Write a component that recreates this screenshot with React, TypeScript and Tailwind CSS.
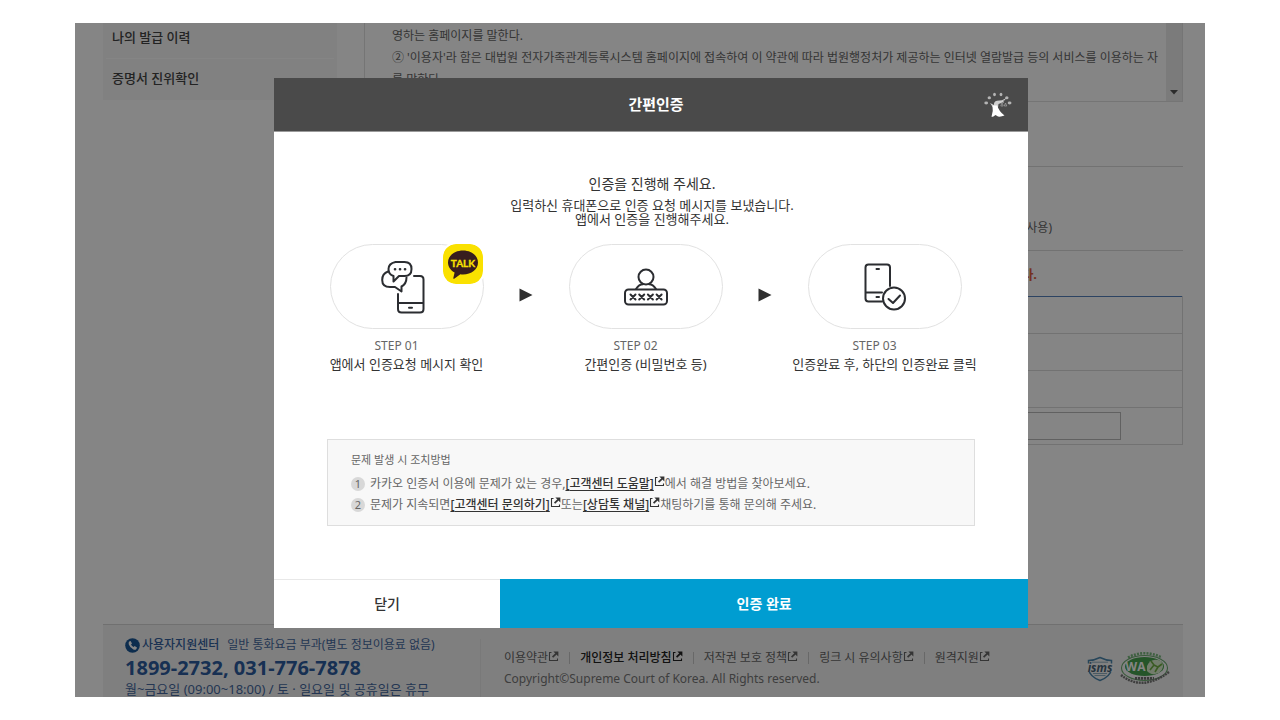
import React from "react";

function ExternalIcon() {
  return (
    <svg viewBox="0 0 11 11" className="mb-1 inline-block h-[11px] w-[11px] shrink-0" fill="none" stroke="currentColor" aria-hidden="true">
      <path d="M3.5 1.5H1.5V9.5H9.5V7.5" strokeWidth="1.1" />
      <path d="M4.6 6.2L8.2 2.6" strokeWidth="1.8" />
      <path d="M5.4 0.5H10.400V5.500Z" fill="currentColor" stroke="none" />
    </svg>
  );
}

function TalkBadge() {
  return (
    <svg viewBox="0 0 40 40" className="absolute -top-px right-0 h-10 w-10 rounded-[13px] ring-2 ring-white" role="img" aria-label="TALK">
      <rect width="40" height="40" rx="13" fill="#fae100" />
      <path d="M20 6.500c-8.500 0-15 5.300-15 12 0 4.300 2.700 7.900 6.600 10l-1.300 5.600c-.1.600.4.900.9.600l6.200-4.400c.8.100 1.700.2 2.600.2 8.500 0 15-5.300 15-12s-6.500-12-15-12z" fill="#371d1e" />
      <text x="20" y="22.500" textAnchor="middle" fontSize="10" fontWeight="bold" fontFamily="Lato, sans-serif" fill="#fae100" stroke="#fae100" strokeWidth=".3">TALK</text>
    </svg>
  );
}

function ChatPhoneIcon() {
  return (
    <svg viewBox="0 0 44 54" className="mr-2 h-[54px] w-11" fill="none" stroke="#2b2d31" strokeWidth="2" strokeLinecap="round" strokeLinejoin="round" aria-hidden="true">
      <path d="M33 16H39Q42.500 16 42.500 19.500V49Q42.500 52.500 39 52.500H20.500Q17 52.500 17 49V34M17 43H42.500M28 47.800H31" />
      <path d="M14.500 2H23.500Q30.500 2 30.500 9T23.500 16H18L12.500 21.500V16Q7.500 14.500 7.500 9T14.500 2Z" />
      <path d="M7 11.500Q1.200 13.500 1.200 20Q1.200 27 9 27H14L20.500 31.500V26.500Q25.500 24 25.500 17.500" />
      <path d="M14 9.200H14.100M19 9.200H19.100M24 9.200H24.100" strokeWidth="2.600" />
    </svg>
  );
}

function PasswordIcon() {
  return (
    <svg viewBox="0 0 44 38" className="h-[38px] w-11" fill="none" stroke="#2b2d31" strokeWidth="2" strokeLinecap="round" strokeLinejoin="round" aria-hidden="true">
      <circle cx="22" cy="9" r="7.500" />
      <path d="M12 21Q15 16.300 19 16.300M32 21Q29 16.300 25 16.300" />
      <rect x="1" y="21.500" width="42" height="15" rx="3.500" />
      <path d="M6.500 26.500l5 5m0-5l-5 5M15.200 26.500l5 5m0-5l-5 5M23.900 26.500l5 5m0-5l-5 5M32.600 26.500l5 5m0-5l-5 5" />
    </svg>
  );
}

function PhoneCheckIcon() {
  return (
    <svg viewBox="0 0 42 48" className="h-12 w-[42px]" fill="none" stroke="#2b2d31" strokeWidth="2" strokeLinecap="round" strokeLinejoin="round" aria-hidden="true">
      <path d="M18 38.500H4.500Q1.500 38.500 1.500 35.500V4.500Q1.500 1.500 4.500 1.500H23Q26 1.500 26 4.500V23M1.500 29.500H18M12.500 6H15M12.500 34H15" />
      <circle cx="30" cy="35.500" r="11" />
      <path d="M24.500 36L29 40L36 32.500" />
    </svg>
  );
}

function HeaderEmblem() {
  return (
    <svg viewBox="0 0 28 26" className="h-[26px] w-7" aria-hidden="true">
      <g fill="#b4b4b4">
        <ellipse cx="2.200" cy="11" rx="1.900" ry="1.400" />
        <ellipse cx="5.300" cy="5.800" rx="1.700" ry="1.500" />
        <ellipse cx="10.500" cy="2.500" rx="1.400" ry="1.700" />
        <ellipse cx="17" cy="2.500" rx="1.400" ry="1.700" />
        <ellipse cx="22.800" cy="5.800" rx="1.700" ry="1.500" />
        <ellipse cx="25.600" cy="11" rx="1.900" ry="1.400" />
      </g>
      <path d="M6 11L10 13Q9.500 9.500 13 8.800L18 8.300L22.500 6L18.500 10.500L14.500 12L14 15.500L9 15.500Z" fill="#cfcfcf" />
      <path d="M8.500 13.500H13.200Q15 19.500 20.500 23.500Q17 25 14 24.500L11.500 23L9 24.800H7.500Q9.500 19 8.500 13.500Z" fill="#fff" />
      <path d="M19.500 8V11M16.800 14L18 10.500L19.200 14ZM20.300 14L21.500 11L22.700 14Z" fill="none" stroke="#9c9c9c" strokeWidth=".8" />
    </svg>
  );
}

function IsmsMark() {
  return (
    <svg viewBox="0 0 28 26" className="h-[26px] w-7" role="img" aria-label="ISMS">
      <path d="M14 1.500Q8 4.500 2.500 4.500V13Q3.500 20.500 14 24.500Q24.500 20.500 25.500 13V4.500Q20 4.500 14 1.500Z" fill="none" stroke="#4b86ad" strokeWidth="1.500" />
      <path d="M6 6.200H22M7 17.500H21M8.500 19.500H19.500" stroke="#8faec0" strokeWidth="1" />
      <rect y="7.500" width="28" height="8.500" fill="#f7f7f7" />
      <text x="14" y="15.500" textAnchor="middle" fontSize="11.500" fontWeight="bold" fontStyle="italic" fontFamily="Open Sans, sans-serif" fill="#4a6478">isms</text>
    </svg>
  );
}

function WaMark() {
  return (
    <svg viewBox="0 0 50 36" className="h-9 w-[50px]" role="img" aria-label="WA">
      <path d="M8 6.500Q24-2 42 6.500" fill="none" stroke="#79b97e" strokeWidth="2.600" strokeDasharray="2 1.200" />
      <ellipse cx="24.500" cy="17" rx="23" ry="12.500" fill="#f9f9f9" stroke="#6cab70" strokeWidth="1.100" />
      <ellipse cx="24.500" cy="15.500" rx="19.500" ry="9.500" fill="#48a34f" />
      <path d="M27 15Q31 6 41 10Q46 16 39 22Q31 25 27 20Z" fill="#dcefcf" />
      <path d="M30 19L34 14L31 10M34 14L38 16L35 21M38 16L42 13" fill="none" stroke="#71ae43" strokeWidth="1.600" />
      <text x="15.500" y="20" textAnchor="middle" fontSize="12" fontWeight="bold" fontFamily="Open Sans, sans-serif" fill="#fff">WA</text>
      <path d="M15 27.300H34" stroke="#707070" strokeWidth="2.800" strokeDasharray="2.200 .8" />
      <path d="M1 24Q22 41 49 21" fill="none" stroke="#777" strokeWidth="2.400" strokeDasharray="2 .8" />
    </svg>
  );
}

function Arrow() {
  return (
    <svg viewBox="0 0 14 14" className="mt-11 h-3.5 w-3.5" aria-hidden="true">
      <path d="M0.500 0.500L13.500 7L0.500 13.500Z" fill="#2f2f2f" />
    </svg>
  );
}

function Step({ no, text, icon, badge }: { no: string; text: string; icon: React.ReactNode; badge?: React.ReactNode }) {
  return (
    <li className="flex flex-1 flex-col items-center whitespace-nowrap">
      <div className="relative flex h-[85px] w-[154px] items-center justify-center rounded-full border border-[#e2e2e2]">
        {icon}
        {badge}
      </div>
      <span className="mt-2 pr-5 text-xs leading-[18px] text-[#666]">{no}</span>
      <span className="text-[13px] leading-[18px] text-[#333]">{text}</span>
    </li>
  );
}

function HelpLink({ children }: { children: React.ReactNode }) {
  return (
    <a href="#help" className="inline-flex items-center text-[#333]">
      <span className="font-medium underline underline-offset-2">[{children}]</span>
      <ExternalIcon />
    </a>
  );
}

function HelpItem({ no, children }: { no: number; children: React.ReactNode }) {
  return (
    <li className="flex items-center">
      <span className="mr-[5px] flex h-3.5 w-3.5 items-center justify-center rounded-full bg-[#d8d8d8] text-[11px]">{no}</span>
      <span>{children}</span>
    </li>
  );
}

function Modal() {
  return (
    <section role="dialog" aria-modal="true" aria-labelledby="modal-title" className="w-full max-w-[754px] self-start bg-white">
      <header className="flex h-[54px] items-center border-b border-[#9a9a9a] bg-[#4a4a4a] pr-4 pl-[54px]">
        <h1 id="modal-title" className="flex-1 text-center text-[15px] font-bold text-white">간편인증</h1>
        <HeaderEmblem />
      </header>
      <div className="px-[53px] pt-[42px] pb-[53px]">
        <p className="pl-0.5 text-center text-sm leading-5 text-[#333]">인증을 진행해 주세요.</p>
        <p className="mt-1 pl-0.5 text-center text-[13px] leading-[14px] text-[#333]">
          입력하신 휴대폰으로 인증 요청 메시지를 보냈습니다.
          <br />
          앱에서 인증을 진행해주세요.
        </p>
        <ol className="-mr-[22px] -ml-[33px] mt-[18px] flex">
          <Step no="STEP 01" text="앱에서 인증요청 메시지 확인" icon={<ChatPhoneIcon />} badge={<TalkBadge />} />
          <li aria-hidden="true"><Arrow /></li>
          <Step no="STEP 02" text="간편인증 (비밀번호 등)" icon={<PasswordIcon />} />
          <li aria-hidden="true"><Arrow /></li>
          <Step no="STEP 03" text="인증완료 후, 하단의 인증완료 클릭" icon={<PhoneCheckIcon />} />
        </ol>
        <div className="mt-[66px] border border-[#dedede] bg-[#f8f8f8] px-[23px] pt-[10px] pb-[10px] text-xs text-[#666]">
          <h2 className="text-[11px] leading-5">문제 발생 시 조치방법</h2>
          <ol className="mt-[3px] leading-[21px]">
            <HelpItem no={1}>
              카카오 인증서 이용에 문제가 있는 경우,<HelpLink>고객센터 도움말</HelpLink>에서 해결 방법을 찾아보세요.
            </HelpItem>
            <HelpItem no={2}>
              문제가 지속되면<HelpLink>고객센터 문의하기</HelpLink>또는<HelpLink>상담톡 채널</HelpLink>채팅하기를 통해 문의해 주세요.
            </HelpItem>
          </ol>
        </div>
      </div>
      <div className="flex h-[49px] text-sm">
        <button type="button" className="w-[30%] border-t border-[#e8e8e8] font-medium text-[#333]">닫기</button>
        <button type="button" className="flex-1 bg-[#009dd1] font-bold text-white">인증 완료</button>
      </div>
    </section>
  );
}

const footerLinks = [
  { text: "이용약관", style: "text-[#666]" },
  { text: "개인정보 처리방침", style: "font-medium text-[#222]" },
  { text: "저작권 보호 정책", style: "text-[#666]" },
  { text: "링크 시 유의사항", style: "text-[#666]" },
  { text: "원격지원", style: "text-[#666]" },
];

function Footer() {
  return (
    <footer className="mr-[22px] ml-7 flex h-[73px] shrink-0 overflow-hidden border-t border-[#d6d6d6] bg-[#f4f4f4]">
      <div className="w-[377px] shrink-0 pt-[10px] pl-[22px] whitespace-nowrap text-[#45699f]">
        <p className="flex items-center text-xs leading-5">
          <svg viewBox="0 0 15 15" className="mr-0.5 h-[15px] w-[15px]" aria-hidden="true">
            <circle cx="7.500" cy="7.500" r="7.300" fill="#1a5796" />
            <path d="M4.200 3.500L5.600 2.900L7 5.400L6 6.400Q6.800 8.200 8.600 9L9.600 8L12 9.500L11.400 10.900Q10.300 12.300 8.400 11.500Q5 10 3.800 6.600Q3.300 4.500 4.200 3.500Z" fill="#fff" />
          </svg>
          <strong className="mr-2 font-medium text-[#33609e]">사용자지원센터</strong>
          일반 통화요금 부과(별도 정보이용료 없음)
        </p>
        <p className="text-xl leading-[26px] font-bold text-[#2d5c9f]">1899-2732, 031-776-7878</p>
        <p className="text-[13px] leading-4">월~금요일 (09:00~18:00) / 토 · 일요일 및 공휴일은 휴무</p>
      </div>
      <div className="mt-[14px] flex-1 border-l border-[#e8e8e8] pl-[23px] whitespace-nowrap">
        <nav className="mt-[9px] flex items-center text-xs leading-5">
          {footerLinks.map((link, i) => (
            <span key={link.text} className="flex items-center">
              {i > 0 && <span className="mx-[10px] h-3 w-px bg-[#c8c8c8]" />}
              <a href="#footer" className={"flex items-center " + link.style}>
                {link.text}
                <ExternalIcon />
              </a>
            </span>
          ))}
        </nav>
        <p className="text-xs leading-[22px] text-[#777]">Copyright©Supreme Court of Korea. All Rights reserved.</p>
      </div>
      <div className="flex items-center gap-1.5 pt-4 pr-[13px]">
        <IsmsMark />
        <WaMark />
      </div>
    </footer>
  );
}

export default function App() {
  return (
    <div className="bg-white px-[75px] py-[23px] font-['Noto_Sans','Noto_Sans_CJK_KR',sans-serif]">
      <main className="relative flex h-[calc(100vh-46px)] flex-col overflow-hidden bg-white">
        <div className="flex min-h-0 flex-1 pr-[22px] pl-7">
          <nav className="w-[234px] shrink-0 self-start bg-[#f7f7f7] px-[3px] text-[13px] leading-5 font-medium text-[#444]">
            <a href="#history" className="block border-b border-[#fff] px-1.5 pt-1 pb-[11px]">나의 발급 이력</a>
            <a href="#verify" className="block px-1.5 pt-[9px] pb-3">증명서 진위확인</a>
          </nav>
          <div className="ml-[27px] flex-1">
            <div className="flex h-[79px] border-r border-b border-l border-[#e0e0e0]">
              <div className="flex-1 overflow-hidden pt-0.5 pl-[27px] text-xs leading-[22px] text-[#666]">
                <p>영하는 홈페이지를 말한다.</p>
                <p>② '이용자'라 함은 대법원 전자가족관계등록시스템 홈페이지에 접속하여 이 약관에 따라 법원행정처가 제공하는 인터넷 열람발급 등의 서비스를 이용하는 자<br />를 말한다.</p>
              </div>
              <div className="flex w-4 items-end justify-center bg-[#ececec] pb-[6px]">
                <svg viewBox="0 0 8 5" className="h-[5px] w-2" aria-hidden="true"><path d="M0 0H8L4 4.500Z" fill="#555" /></svg>
              </div>
            </div>
            <div className="mt-16 flex h-[85px] items-end justify-end border-y border-[#dadada] pr-[131px] pb-3">
              <span className="text-xs leading-5 text-[#666]">사용)</span>
            </div>
            <p className="pt-[13px] pr-[146px] text-right text-[13px] leading-5 font-bold text-[#df6040]">다.</p>
            <table className="mt-3 w-full border-collapse border border-t-[#5580bd] border-[#dadada]">
              <tbody>
                {[0, 1, 2].map((row) => (
                  <tr key={row} className="h-[37px] border-b border-[#dadada]"><td /></tr>
                ))}
                <tr className="h-[37px]">
                  <td className="pr-[61px]"><input type="text" aria-label="입력" className="block h-7 w-full border border-[#bbb]" /></td>
                </tr>
              </tbody>
            </table>
          </div>
        </div>
        <Footer />
        <div className="absolute inset-0 flex justify-center bg-black/48 pt-[55px] pl-[22px]">
          <Modal />
        </div>
      </main>
    </div>
  );
}
